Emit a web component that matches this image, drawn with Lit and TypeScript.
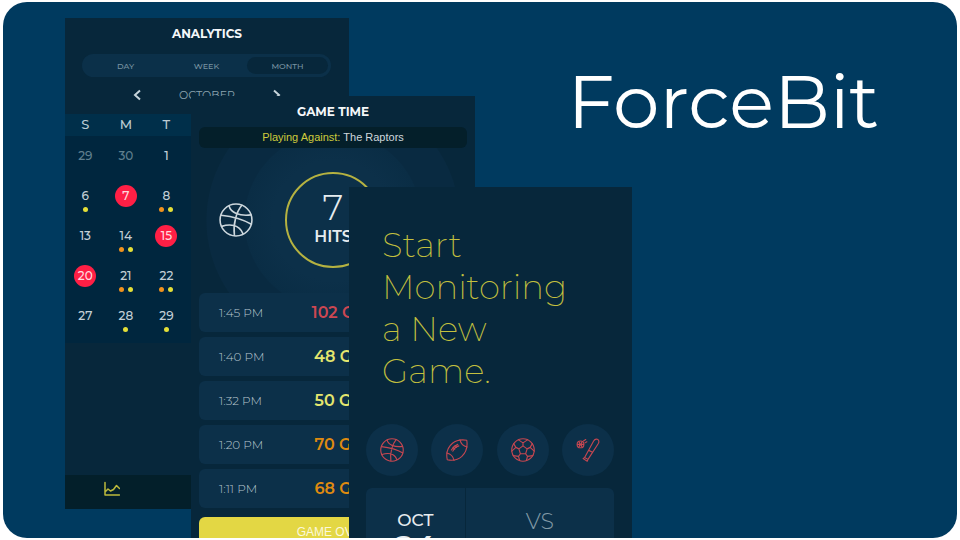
import { LitElement, html, css, svg } from "lit";
import { customElement, state } from "lit/decorators.js";
import { classMap } from "lit/directives/class-map.js";

const base = css`
  *, *::before, *::after { box-sizing: border-box; }
  :host { display: block; }
  button { font: inherit; color: inherit; border: 0; padding: 0; background: none; cursor: pointer; }
  h1, h2, p { margin: 0; font-weight: inherit; }
  svg { display: block; fill: none; stroke: currentColor; stroke-linecap: round; stroke-linejoin: round; }
  .heavy { font-weight: 600; }
`;

const basketball = svg`
  <circle cx="16" cy="16" r="15"/>
  <path d="M21.500 2.200C16.500 8 13 20 14.500 30.500M2 11.500C11 12.500 22 15 30.500 20M9.500 2.800C11 9 19 12.500 30 11.200M2.500 22C10 19.500 19 20 22.500 28.800"/>`;
const football = svg`
  <path d="M3 29C1 19.500 4 12 10 7 15.500 2.500 22 1.800 29 3 30.500 12 28 19 22.500 24.500 17 29.500 10 30.500 3 29Z"/>
  <path d="M20 2.500C21 7 25 11 29.500 12M2.500 20C7 21 11 25 12 29.800M8.500 16C11 11.500 13 10 17 8.500M10.500 17.500C12 14 14.500 11.500 18.500 10.500M10.500 12.500l2.500 2.500M13.500 10l2 2.500"/>`;
const soccer = svg`
  <circle cx="16" cy="16" r="15"/>
  <path d="M16 10.500l5.500 4-2 6.500h-7l-2-6.500ZM16 10.500V6.500M21.500 14.500l4-2M19.500 21l2.500 3.500M12.500 21L10 24.500M10.500 14.500l-4-2M10 2.500l6 4 6-4M28.500 7.500l-3 5 5.500 5M29 23.500l-7 1-1.500 5.500M11.500 30L10 24.500l-7-1M1 17.500l5.500-5-3-5"/>`;
const baseball = svg`
  <path d="M28.500 1.800C30.500 2.600 31 4.500 30 7L16 28.500 11.500 26 23.500 4C25 1.500 26.500 1 28.500 1.800ZM17 16.500l5 2.500M11.500 26l4.500 2.500-1 2.500-5.500-3.500Z"/>
  <circle cx="6" cy="8.500" r="4.500"/>
  <path d="M4 5C5.500 7 5.500 10 4 12M8 5C6.500 7 6.500 10 8 12M2 8.500h8M10 4l3-2M12 6.500l2.500-1.500"/>`;

@customElement("analytics-screen")
class AnalyticsScreen extends LitElement {
  static styles = [base, css`
    :host { background: #07273b; height: 491px; display: flex; flex-direction: column; }
    h2 { padding-top: 8px; font-size: 12px; line-height: 16px; text-align: center; color: #f4f7f9; }
    h2.heavy { font-weight: 700; }
    .tabs { display: grid; grid-template-columns: repeat(3, 1fr); margin: 12px 18px 0 17px; padding: 3px; border-radius: 12px; background: #0b3049; }
    .tabs button { height: 17px; border-radius: 9px; font-size: 8px; font-weight: 500; color: #7893a1; }
    .tabs .on { background: #07273b; }
    .month { display: flex; justify-content: space-between; align-items: center; height: 16px; margin: 10px 68px 11px; font-size: 11px; color: #8ba3af; }
    .month svg { width: 8px; height: 12px; stroke-width: 2; color: #c5d3da; stroke-linecap: butt; stroke-linejoin: miter; }
    table { width: 100%; table-layout: fixed; border-collapse: collapse; }
    thead { background: #002f4a; }
    th { height: 22px; padding: 0 0 2px; color: #bccbd3; font-size: 13px; line-height: 16px; font-weight: 500; }
    tbody { background: #00263e; }
    tbody td { padding: 9px 0 0; height: 40px; vertical-align: top; font-size: 12px; font-weight: 500; color: #c3cfd6; }
    .last td { height: 47px; }
    .num { display: block; width: 22px; margin: 0 auto; line-height: 22px; text-align: center; border-radius: 50%; }
    .dim { color: #5f7f8e; }
    .hit { background: #ff1f45; color: #ffd9df; }
    .dots { display: flex; justify-content: center; gap: 4px; }
    .dots i { width: 5px; height: 5px; border-radius: 50%; background: #e3df38; }
    .dots .o { background: #f0921e; }
    nav { display: grid; grid-template-columns: repeat(3, 1fr); height: 34px; margin-top: auto; background: #031f2a; color: #bdba3c; }
    nav button { display: grid; place-items: center; padding-bottom: 6px; }
    nav svg { width: 16px; height: 16px; }
  `];
  @state() private range = "MONTH";

  private cell(n: number, row: number) {
    const key = row * 100 + n;
    const hit = [107, 215, 320].includes(key);
    const dots = ({ 106: "y", 108: "oy", 214: "oy", 321: "oy", 322: "oy", 428: "y", 429: "y" } as Record<number, string>)[key] ?? "";
    return html`<td><span class=${classMap({ num: true, hit, dim: row === 0 && n > 20 })}>${n}</span>
      ${dots ? html`<div class="dots">${[...dots].map((d) => html`<i class=${d}></i>`)}</div>` : ""}</td>`;
  }

  render() {
    const weeks = [[29, 30, 1], [6, 7, 8], [13, 14, 15], [20, 21, 22], [27, 28, 29]];
    return html`
      <h2 class="heavy">ANALYTICS</h2>
      <div class="tabs">${["DAY", "WEEK", "MONTH"].map((t) => html`
        <button class=${classMap({ on: t === this.range })} aria-pressed=${t === this.range} @click=${() => (this.range = t)}>${t}</button>`)}
      </div>
      <div class="month">
        <button aria-label="Previous month"><svg viewBox="0 0 8 12"><path d="M7 1.500L2 6l5 4.500"/></svg></button>
        <span>OCTOBER</span>
        <button aria-label="Next month"><svg viewBox="0 0 8 12"><path d="M1 1.500L6 6l-5 4.500"/></svg></button>
      </div>
      <table>
        <colgroup><col span="7"></colgroup>
        <thead><tr>${[..."SMT"].map((d) => html`<th scope="col">${d}</th>`)}<td colspan="4"></td></tr></thead>
        <tbody>${weeks.map((w, r) => html`<tr class=${r === 4 ? "last" : ""}>${w.map((n) => this.cell(n, r))}<td colspan="4"></td></tr>`)}</tbody>
      </table>
      <nav><button aria-label="Analytics"><svg viewBox="0 0 16 16" stroke-width="1.500"><path d="M1 1.500V14h14.500M1.500 10.500l2.500-2.500 2.500 2 3-1.500 3-4 3 3"/></svg></button></nav>`;
  }
}

@customElement("game-screen")
class GameScreen extends LitElement {
  static styles = [base, css`
    :host { background: #07273b; padding: 0 8px; }
    h2 { padding-top: 8px; font-size: 12px; line-height: 16px; text-align: center; color: #f4f7f9; }
    h2.heavy { font-weight: 700; }
    .versus { position: relative; z-index: 1; margin-top: 7px; border-radius: 6px; background: #041f2a; font: 11px/21px "Liberation Sans", Arial, sans-serif; text-align: center; color: #cfd8dd; }
    .versus b { font-weight: 400; color: #cfcb3c; }
    .hits { display: grid; grid-template-columns: 1fr 96px 1fr; align-items: center; justify-items: center; height: 145px; margin: 0 -8px; padding: 0 8px 2px;
      background: radial-gradient(circle at 50% 50%, #0c3049 0 60px, #0a2d45 88px, #092a41 89px 126px, #07273b 127px); }
    .hits svg { width: 34px; height: 34px; margin-right: 12px; stroke-width: 1.500px; color: #ccd6dc; }
    .ring { width: 96px; height: 96px; padding-top: 15px; border: 2px solid #b5b241; border-radius: 50%; text-align: center; color: #e6ecef; }
    .ring strong { display: block; font-size: 36px; line-height: 36px; font-weight: 300; }
    .ring span { display: block; font-size: 16px; line-height: 24px; }
    ul { display: grid; gap: 5px; margin: 0; padding: 0; list-style: none; }
    li { display: grid; grid-template-columns: 1fr auto 1fr; align-items: center; height: 39px; padding: 0 20px; border-radius: 6px; background: #0c3049; }
    time { font-size: 12px; font-weight: 300; color: #b6c5ce; }
    li b { font-size: 16px; }
    .red { color: #cd4752; } .yellow { color: #e4e66e; } .orange { color: #df8a10; }
    .over { width: 100%; height: 30px; margin-top: 9px; border-radius: 6px; background: #e3d744; color: #fbf8dc; font: 12px "Liberation Sans", Arial, sans-serif; }
  `];
  render() {
    const rows = [["1:45 PM", "102 G", "red"], ["1:40 PM", "48 G", "yellow"], ["1:32 PM", "50 G", "yellow"], ["1:20 PM", "70 G", "orange"], ["1:11 PM", "68 G", "orange"]];
    return html`
      <h2 class="heavy">GAME TIME</h2>
      <p class="versus"><b>Playing Against:</b> The Raptors</p>
      <div class="hits">
        <svg viewBox="0 0 32 32">${basketball}</svg>
        <div class="ring"><strong>7</strong><span class="heavy">HITS</span></div>
      </div>
      <ul>${rows.map(([t, g, c]) => html`<li><time>${t}</time><b class="heavy ${c}">${g}</b></li>`)}</ul>
      <button class="over">GAME OVER</button>`;
  }
}

@customElement("start-screen")
class StartScreen extends LitElement {
  static styles = [base, css`
    :host { background: #07273b; padding: 37px 18px 0 17px; }
    h2 { max-width: 220px; margin-left: 16px; font-size: 34px; line-height: 42px; font-weight: 200; color: #c3c03f; }
    .sports { display: flex; justify-content: space-between; margin-top: 32px; }
    .sports button { display: grid; place-items: center; width: 52px; height: 52px; border-radius: 50%; background: #0c3049; color: #c54751; }
    .sports svg { width: 24px; height: 24px; stroke-width: 1.500px; }
    .match { display: grid; grid-template-columns: 2fr 3fr; gap: 1px; height: 120px; margin-top: 12px; border-radius: 6px; overflow: hidden; background: #07273b; text-align: center; }
    .match > div { background: #0c3049; padding-top: 22px; }
    .date { font-size: 17px; line-height: 20px; font-weight: 500; color: #e6ecef; }
    .date strong { display: block; font-size: 34px; line-height: 35px; }
    .vs { font-size: 22px; line-height: 24px; font-weight: 300; color: #8199a6; }
  `];
  render() {
    const sports = [["Basketball", basketball], ["Football", football], ["Soccer", soccer], ["Baseball", baseball]] as const;
    return html`
      <h2>Start Monitoring a&nbsp;New Game.</h2>
      <div class="sports">${sports.map(([n, i]) => html`<button aria-label=${n}><svg viewBox="0 0 32 32">${i}</svg></button>`)}</div>
      <div class="match"><div class="date">OCT<strong class="heavy">24</strong></div><div class="vs">VS</div></div>`;
  }
}

@customElement("app-root")
class AppRoot extends LitElement {
  static styles = [base, css`
    :host { background: #fff; padding: 2px 3px; font-family: Montserrat, Inter, "Open Sans", sans-serif; }
    .stage { display: grid; grid-template-columns: 126px 158px 126px 157px 1fr; align-items: start; height: calc(100vh - 4px); padding-left: 62px; overflow: hidden; border-radius: 24px; background: #003a5f; }
    .stage > * { grid-row: 1; }
    analytics-screen { grid-column: 1 / 3; margin-top: 16px; }
    game-screen { grid-column: 2 / 4; margin-top: 94px; }
    start-screen { grid-column: 3 / 5; margin-top: 185px; }
    h1 { grid-column: 4 / -1; margin-top: 56px; padding-right: 78px; font-size: 74px; line-height: 88px; font-weight: 400; text-align: right; white-space: nowrap; color: #fff; }
  `];
  render() {
    return html`<main class="stage">
      <analytics-screen></analytics-screen>
      <game-screen></game-screen>
      <start-screen></start-screen>
      <h1>ForceBit</h1>
    </main>`;
  }
}
